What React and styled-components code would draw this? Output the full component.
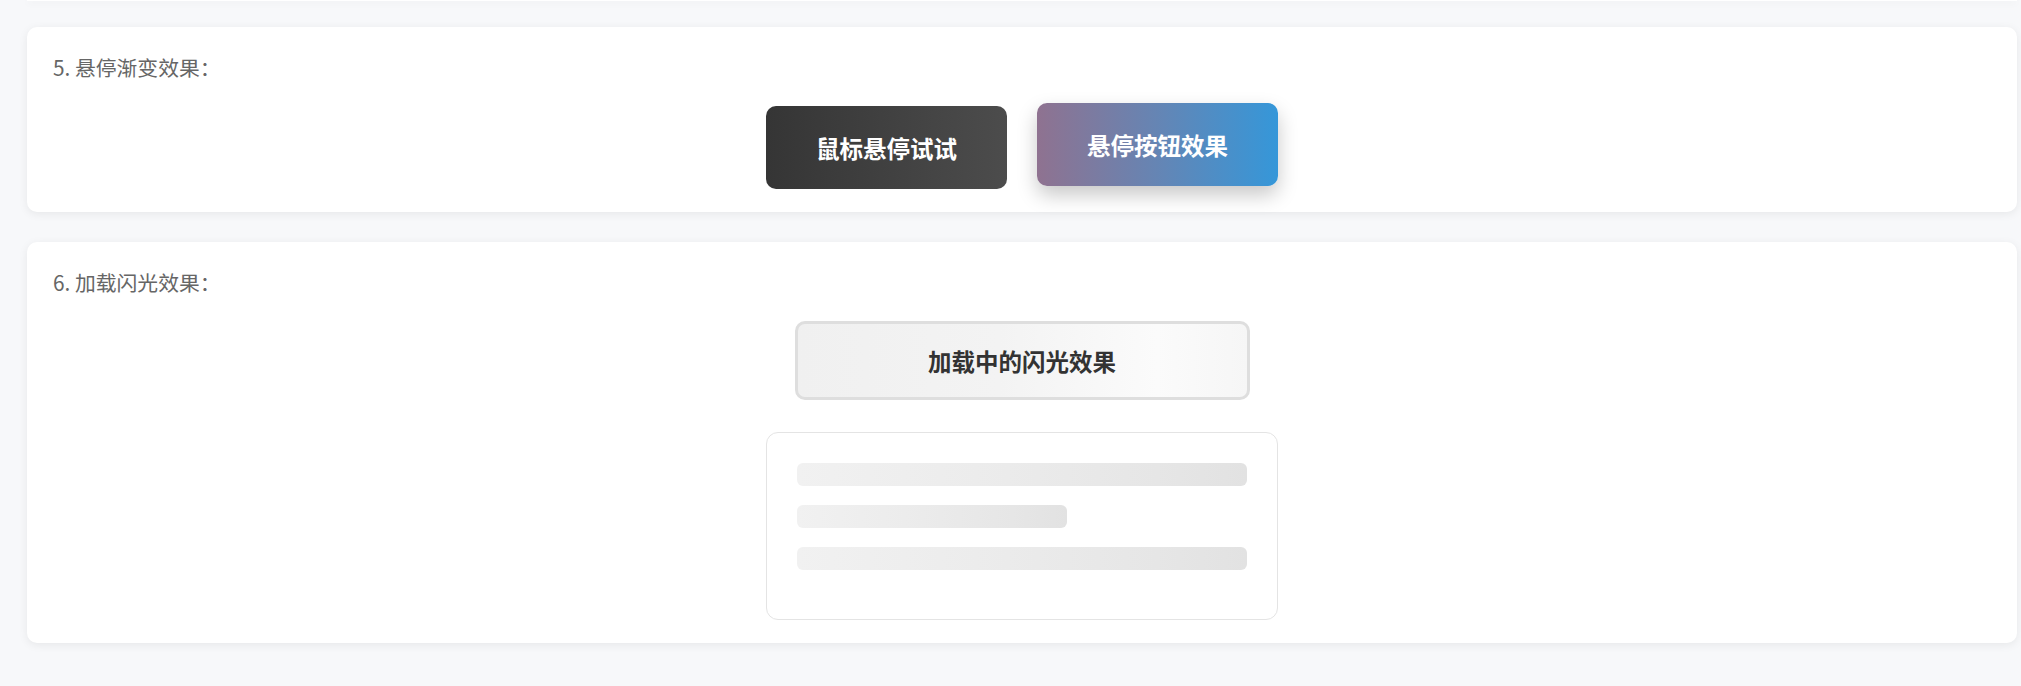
import React from 'react';
import styled, { createGlobalStyle } from 'styled-components';

const GlobalStyle = createGlobalStyle`
  html, body {
    margin: 0;
    padding: 0;
    background: #f7f8fa;
    font-family: 'Noto Sans CJK SC', 'Noto Sans', sans-serif;
  }
`;

const Page = styled.div`
  padding: 0 4px 40px 27px;
`;

const PrevCardTail = styled.div`
  height: 1px;
  margin-bottom: 26px;
  background: #fff;
  box-shadow: 0 2px 6px rgba(0, 0, 0, 0.1);
`;

const Card = styled.section`
  background: #fff;
  border-radius: 10px;
  box-shadow: 0 2px 10px rgba(0, 0, 0, 0.07);
  padding: 26px 26px 23px;
  margin-bottom: 30px;
`;

const Title = styled.h3`
  margin: 0 0 25px;
  font-size: 20.8px;
  line-height: 28px;
  font-weight: 400;
  color: #666;
`;

const ButtonRow = styled.div`
  display: flex;
  justify-content: center;
  align-items: flex-start;
  gap: 30px;
`;

const HoverButton = styled.button`
  width: 241px;
  height: 83px;
  border: 0;
  border-radius: 10px;
  font-family: inherit;
  font-size: 23.5px;
  font-weight: 700;
  color: #fff;
  cursor: pointer;
  background: ${({ $hovered }) =>
    $hovered
      ? 'linear-gradient(90deg, #8f7290 0%, #6585b4 50%, #3597d9 100%)'
      : 'linear-gradient(90deg, #353535 0%, #4c4c4c 100%)'};
  transform: ${({ $hovered }) => ($hovered ? 'translateY(-3px)' : 'none')};
  box-shadow: ${({ $hovered }) => ($hovered ? '0 9px 20px rgba(0, 0, 0, 0.22)' : 'none')};
`;

const Stack = styled.div`
  display: flex;
  flex-direction: column;
  align-items: center;
  gap: 32px;
`;

const ShimmerButton = styled.button`
  box-sizing: border-box;
  width: 455px;
  height: 79px;
  border: 3px solid #dedede;
  border-radius: 10px;
  font-family: inherit;
  font-size: 23.5px;
  font-weight: 700;
  color: #333;
  background: linear-gradient(90deg, #f0f0f0 0%, #f3f3f3 45%, #fbfbfb 80%, #f6f6f6 100%);
`;

const SkeletonCard = styled.div`
  box-sizing: border-box;
  width: 512px;
  padding: 30px 30px 30px;
  border: 1px solid #e4e4e4;
  border-radius: 12px;
  background: #fff;
`;

const SkeletonLine = styled.div`
  width: ${({ $width }) => $width};
  height: 23px;
  margin-bottom: 19px;
  border-radius: 6px;
  background: linear-gradient(90deg, #f1f1f1 0%, #ececec 40%, #e6e6e6 80%, #e2e2e2 100%);
`;

export default function App() {
  return (
    <>
      <GlobalStyle />
      <Page>
        <PrevCardTail />

        <Card>
          <Title>5. 悬停渐变效果：</Title>
          <ButtonRow>
            <HoverButton>鼠标悬停试试</HoverButton>
            <HoverButton $hovered>悬停按钮效果</HoverButton>
          </ButtonRow>
        </Card>

        <Card>
          <Title>6. 加载闪光效果：</Title>
          <Stack>
            <ShimmerButton>加载中的闪光效果</ShimmerButton>
            <SkeletonCard>
              <SkeletonLine $width="100%" />
              <SkeletonLine $width="60%" />
              <SkeletonLine $width="100%" />
            </SkeletonCard>
          </Stack>
        </Card>
      </Page>
    </>
  );
}
